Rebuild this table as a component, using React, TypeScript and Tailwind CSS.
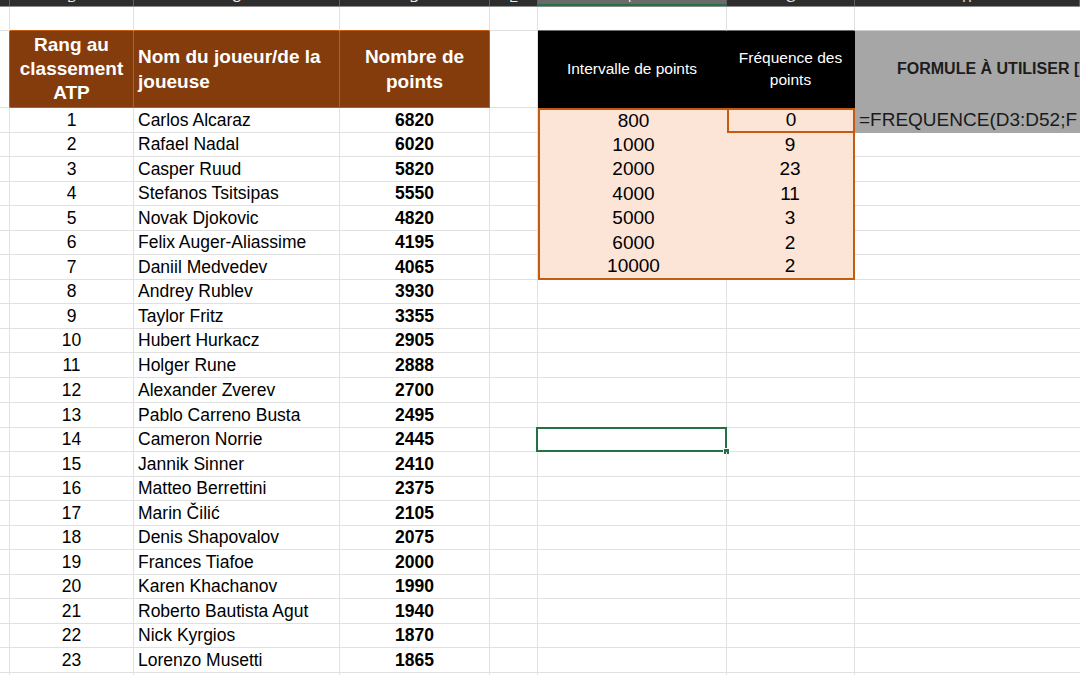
import clsx from 'clsx'

// column widths A..H, H takes the rest of the sheet
const COLS = ['w-[10px]', 'w-[124px]', 'w-[206px]', 'w-[150px]', 'w-[48px]', 'w-[189px]', 'w-[128px]', 'flex-1']
const LETTERS = ['A', 'B', 'C', 'D', 'E', 'F', 'G', 'H']

const PLAYERS: [string, number][] = [
  ['Carlos Alcaraz', 6820],
  ['Rafael Nadal', 6020],
  ['Casper Ruud', 5820],
  ['Stefanos Tsitsipas', 5550],
  ['Novak Djokovic', 4820],
  ['Felix Auger-Aliassime', 4195],
  ['Daniil Medvedev', 4065],
  ['Andrey Rublev', 3930],
  ['Taylor Fritz', 3355],
  ['Hubert Hurkacz', 2905],
  ['Holger Rune', 2888],
  ['Alexander Zverev', 2700],
  ['Pablo Carreno Busta', 2495],
  ['Cameron Norrie', 2445],
  ['Jannik Sinner', 2410],
  ['Matteo Berrettini', 2375],
  ['Marin Čilić', 2105],
  ['Denis Shapovalov', 2075],
  ['Frances Tiafoe', 2000],
  ['Karen Khachanov', 1990],
  ['Roberto Bautista Agut', 1940],
  ['Nick Kyrgios', 1870],
  ['Lorenzo Musetti', 1865],
]

const BINS: [number, number][] = [
  [800, 0],
  [1000, 9],
  [2000, 23],
  [4000, 11],
  [5000, 3],
  [6000, 2],
  [10000, 2],
]

const GRID_R = 'border-r border-r-[#e1e1e1]'
const GRID_B = 'border-b border-b-[#e1e1e1]'

interface CellProps {
  col: number
  r?: string
  b?: string
  className?: string
  children?: React.ReactNode
}

function Cell({ col, r = GRID_R, b = GRID_B, className, children }: CellProps) {
  return (
    <div className={clsx('shrink-0 flex items-center min-w-0', COLS[col], r, b, className)}>
      {children}
    </div>
  )
}

function ColumnBar() {
  return (
    <div className="flex h-[7px] overflow-hidden bg-[#2d2d2d] border-b border-b-[#8c8c8c]">
      {LETTERS.map((l, i) => (
        <div
          key={l}
          className={clsx(
            'shrink-0 flex justify-center items-start border-r border-r-[#5e5e5e]',
            COLS[i],
            l === 'F' && 'bg-[#6a6a6a] border-b-2 border-b-[#217346]'
          )}
        >
          <span className="text-[13px] leading-[13px] mt-[-9px] text-[#e8e8e8]">{i === 0 ? '' : l}</span>
        </div>
      ))}
    </div>
  )
}

function HeaderRow() {
  const brownR = 'border-r border-r-[#c55a11]'
  const brownB = 'border-b border-b-[#c55a11]'
  return (
    <div className="flex h-[77px]">
      <Cell col={0} r={brownR} />
      <Cell col={1} r={brownR} b={brownB} className="bg-[#843c0c] justify-center text-center">
        <span className="text-white font-bold text-[19px] leading-[24px]">
          Rang au
          <br />
          classement
          <br />
          ATP
        </span>
      </Cell>
      <Cell col={2} r={brownR} b={brownB} className="bg-[#843c0c] pl-[4px]">
        <span className="text-white font-bold text-[19px] leading-[25px]">
          Nom du joueur/de la
          <br />
          joueuse
        </span>
      </Cell>
      <Cell col={3} r={brownR} b={brownB} className="bg-[#843c0c] justify-center text-center">
        <span className="text-white font-bold text-[19px] leading-[25px]">
          Nombre de
          <br />
          points
        </span>
      </Cell>
      <Cell col={4} />
      <Cell col={5} r="border-r border-r-black" b="border-b border-b-black" className="bg-black justify-center">
        <span className="text-white text-[15.5px]">Intervalle de points</span>
      </Cell>
      <Cell col={6} r="border-r border-r-black" b="border-b border-b-black" className="bg-black justify-center text-center">
        <span className="text-white text-[15.5px] leading-[22px]">
          Fréquence des
          <br />
          points
        </span>
      </Cell>
      <Cell col={7} r="" b="border-b border-b-[#a6a6a6]" className="bg-[#a6a6a6] pl-[42px] overflow-hidden">
        <span className="whitespace-nowrap text-[#1c1c1c] font-bold text-[16px]">FORMULE À UTILISER [Excel]</span>
      </Cell>
    </div>
  )
}

function DataRow({ i }: { i: number }) {
  const player = PLAYERS[i]
  const bin = i < BINS.length ? BINS[i] : null
  const last = i === BINS.length - 1
  const orange = 'border-[#c55a11]'

  return (
    <div className={clsx('flex text-black', i % 2 === 0 || i === 11 ? 'h-[25px]' : 'h-[24px]')}>
      <Cell col={0} />
      <Cell col={1} className="justify-center text-[17.5px]">
        {player ? i + 1 : ''}
      </Cell>
      <Cell col={2} className="pl-[4px] text-[17.5px] whitespace-nowrap">
        {player ? player[0] : ''}
      </Cell>
      <Cell col={3} className="justify-center font-bold text-[17.5px]">
        {player ? player[1] : ''}
      </Cell>
      <Cell col={4} />
      {bin ? (
        <>
          <Cell
            col={5}
            r="border-r-0"
            b={last ? 'border-b-2 border-b-[#c55a11]' : 'border-b-0'}
            className={clsx('bg-[#fce4d6] justify-center text-[19px] border-l-2', orange, i === 0 && 'border-t-2 border-t-[#c55a11]')}
          >
            {bin[0]}
          </Cell>
          <Cell
            col={6}
            r="border-r-2 border-r-[#c55a11]"
            b={last || i === 0 ? 'border-b-2 border-b-[#c55a11]' : 'border-b-0'}
            className={clsx(
              'bg-[#fce4d6] justify-center text-[19px]',
              i === 0 && 'border-t-2 border-t-[#c55a11] border-l-2 border-l-[#c55a11]'
            )}
          >
            {bin[1]}
          </Cell>
        </>
      ) : (
        <>
          <Cell col={5} className="relative">
            {i === 13 && (
              <div className="absolute left-[-2px] top-[-1px] right-[-1px] bottom-[-1px] border-2 border-[#217346]">
                <div className="absolute right-[-5px] bottom-[-5px] w-[7px] h-[7px] bg-[#217346] border border-white" />
              </div>
            )}
          </Cell>
          <Cell col={6} />
        </>
      )}
      {i === 0 ? (
        <Cell col={7} r="" b="border-b border-b-[#a6a6a6]" className="bg-[#a6a6a6] pl-[4px] overflow-hidden">
          <span className="whitespace-nowrap text-[19px] text-[#1a1a1a]">=FREQUENCE(D3:D52;F</span>
        </Cell>
      ) : (
        <Cell col={7} r="" />
      )}
    </div>
  )
}

export default function App() {
  const rows = Array.from({ length: 24 }, (_, i) => i)
  return (
    <div className="w-[1080px] h-[675px] overflow-hidden bg-white font-['Liberation_Sans',Arial,sans-serif]">
      <ColumnBar />
      {/* row 1, empty - bottom line turns brown/black over the header cells */}
      <div className="flex h-[24px]">
        <Cell col={0} />
        <Cell col={1} b="border-b border-b-[#c55a11]" />
        <Cell col={2} b="border-b border-b-[#c55a11]" />
        <Cell col={3} b="border-b border-b-[#c55a11]" />
        <Cell col={4} />
        <Cell col={5} b="border-b border-b-[#6b6b6b]" />
        <Cell col={6} b="border-b border-b-[#6b6b6b]" />
        <Cell col={7} r="" b="border-b border-b-[#cfcfcf]" />
      </div>
      <HeaderRow />
      {rows.map((i) => (
        <DataRow key={i} i={i} />
      ))}
    </div>
  )
}
